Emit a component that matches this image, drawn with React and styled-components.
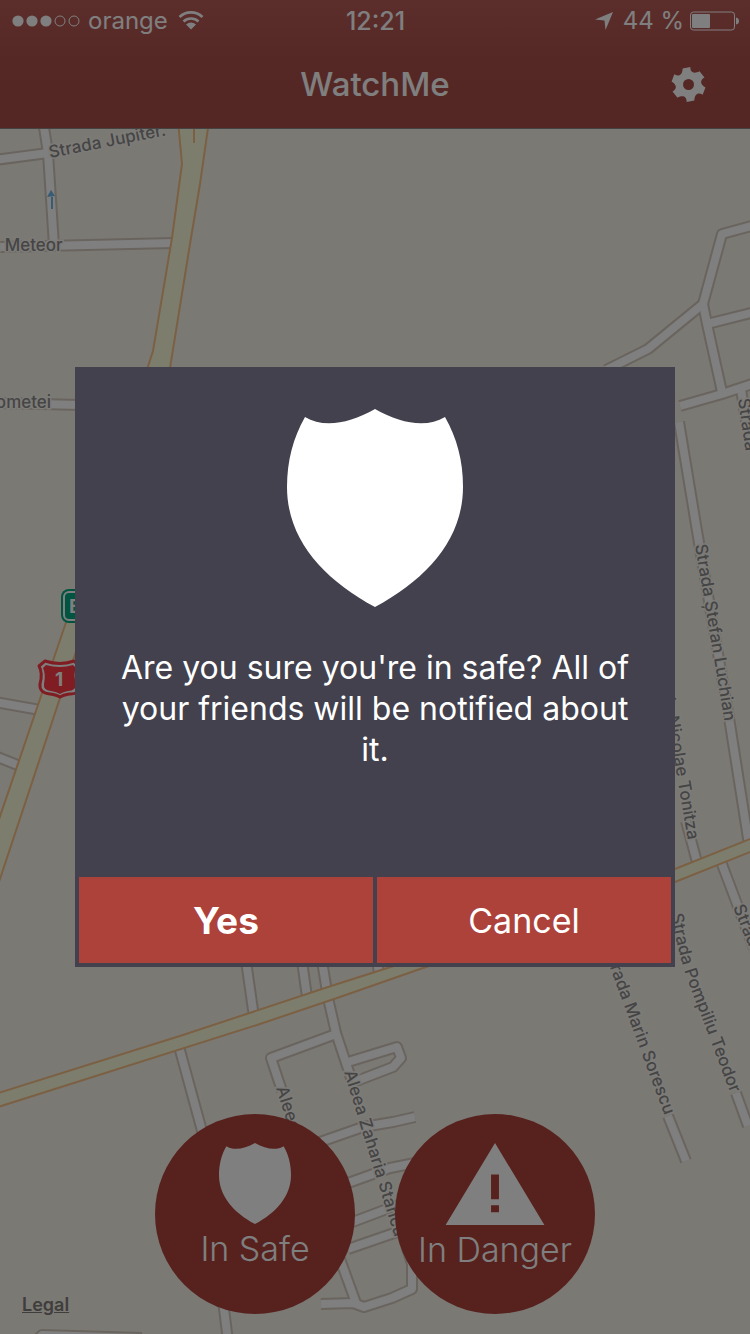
import React from 'react';
import styled, { createGlobalStyle } from 'styled-components';

const GlobalStyle = createGlobalStyle`
  * {
    box-sizing: border-box;
  }
  body {
    margin: 0;
    font-family: Inter, 'Liberation Sans', sans-serif;
  }
  button {
    border: 0;
    padding: 0;
    font-family: inherit;
    color: inherit;
    cursor: pointer;
  }
`;

const streets = [
  'M43 120 L48 152 L54 245',
  'M-5 159 L48 152',
  'M-5 246 L174 242',
  'M-5 402 L80 404',
  'M-5 701 L40 709',
  'M-5 755 L20 765',
  'M755 224 L722 233 L703 303 L707 323 L722 391',
  'M703 303 L648 348 L606 369',
  'M707 323 L755 311',
  'M680 405 L722 393 L755 382',
  'M741 388 L746 420',
  'M679 421 L697 530 L730 723 L750 850',
  'M686 820 L698 865',
  'M720 858 L737 903 L755 950',
  'M736 1092 L748 1125',
  'M668 1115 L686 1160',
  'M246 960 L254 1016',
  'M302 960 L307 996',
  'M322 960 L328 997 L336 1032 L352 1080',
  'M377 960 L379 972',
  'M336 1033 L271 1057 L282 1090',
  'M348 1061 L397 1046 L401 1057 L393 1066 L354 1081',
  'M178 1042 L202 1130 L228 1340',
  'M320 1141 L363 1126 L393 1121 L415 1116',
  'M348 1182 L390 1167 L415 1162',
  'M350 1222 L387 1208 L410 1200',
  'M348 1248 L400 1230',
  'M340 1258 L356 1302',
  'M321 1303 L353 1302 L364 1306 L392 1297 L412 1288 L412 1263 L400 1225',
  'M34 1342 L42 1334 L142 1337',
];

const highways = [
  'M178 120 L182 163 L172 237 L153 350 L140 390 L166 390 L170 367 L190 243 L200 183 L209 120 Z',
  'M80 580 L38 704 L-5 830 L-5 893 L60 697 L90 610 Z',
  'M-5 1093 L183 1034 L328 986 L500 931 L675 868 L755 836 L755 849 L675 881 L500 942 L423 967 L337 997 L257 1024 L-5 1107 Z',
];

const labels = [
  { id: 'jupiter', d: 'M50 157 L260 116', text: 'Strada Jupiter.' },
  { id: 'meteor', d: 'M-53 250 L200 250', text: 'Strada Meteor' },
  { id: 'prometei', d: 'M-79 407 L200 407', text: 'Strada Prometei' },
  { id: 'right', d: 'M738 398 L770 620', text: 'Strada' },
  { id: 'luchian', d: 'M695 544 L735 784', text: 'Strada Ștefan Luchian' },
  { id: 'tonitza', d: 'M657 659 L701 915', text: 'Strada Nicolae Tonitza' },
  { id: 'corner', d: 'M733 906 L800 1075', text: 'Strada' },
  { id: 'teodor', d: 'M671 913 Q679 958 691 988 L759 1168', text: 'Strada Pompiliu Teodor' },
  { id: 'sorescu', d: 'M604 950 L700 1211', text: 'Strada Marin Sorescu' },
  { id: 'aleea', d: 'M276 1087 L340 1290', text: 'Aleea' },
  { id: 'stancu', d: 'M344 1071 L420 1319', text: 'Aleea Zaharia Stancu' },
];

const gearPath = () => {
  const point = (angle, r) => {
    const rad = (angle * Math.PI) / 180;
    return `${(Math.cos(rad) * r).toFixed(2)} ${(Math.sin(rad) * r).toFixed(2)}`;
  };
  let d = '';
  for (let i = 0; i < 6; i++) {
    const a = -97 + i * 60;
    d += `${i === 0 ? 'M' : 'L'}${point(a - 13, 50)} L${point(a + 13, 51)} `;
    d += `C${point(a + 15, 35)} ${point(a + 36, 34)} ${point(a + 47, 50)} `;
  }
  return `${d}Z M16 0 A16 16 0 1 0 -16 0 A16 16 0 1 0 16 0 Z`;
};

const ShieldIcon = ({ width }) => (
  <svg width={width} viewBox="0 0 176 198" fill="#fff" aria-hidden="true">
    <path d="M88 0 C62 15 36 19 18 8 C6 29 0 52 0 78 C0 130 36 170 88 198 C140 170 176 130 176 78 C176 52 170 29 158 8 C140 19 114 15 88 0 Z" />
  </svg>
);

const WarningIcon = () => (
  <svg width="100" height="82" viewBox="0 0 100 83" aria-hidden="true">
    <path
      fill="#fff"
      fillRule="evenodd"
      d="M50 0 L100 83 H0 Z M46 32 V57 H54 V32 Z M46 63 V70 H54 V63 Z"
    />
  </svg>
);

const StreetMap = () => (
  <MapSvg viewBox="0 128 750 1206" preserveAspectRatio="xMidYMin slice">
    <g fill="none" strokeLinejoin="round">
      {streets.map((d) => (
        <path key={d} d={d} stroke="#d4c8bc" strokeWidth="12" />
      ))}
      {streets.map((d) => (
        <path key={d} d={d} stroke="#fefeff" strokeWidth="8" />
      ))}
    </g>
    {highways.map((d) => (
      <path key={d} d={d} fill="#f9fbd8" stroke="#f6c088" strokeWidth="2" />
    ))}
    <path d="M194 120 V142" stroke="#f6c088" strokeWidth="2" />
    <path d="M52 208 V196" stroke="#70b8e8" strokeWidth="2" />
    <path d="M47 196 L51 189 L55 195 Z" fill="#70b8e8" />
    {labels.map(({ id, d, text }) => (
      <g key={id}>
        <path id={id} d={d} fill="none" />
        <StreetName>
          <textPath href={`#${id}`}>{text}</textPath>
        </StreetName>
      </g>
    ))}
    <rect x="61" y="588" width="44" height="34" rx="8" fill="#00a880" />
    <rect
      x="64"
      y="591"
      width="38"
      height="28"
      rx="5"
      fill="#00a880"
      stroke="#fff"
      strokeWidth="2"
    />
    <RoadNumber x="69" y="612">
      E
    </RoadNumber>
    <g strokeLinejoin="round">
      <path
        d="M45 660 Q60 665 74 660 L80 666 Q76 672 80 683 Q80 694 69 693 Q63 694 60 696 Q57 694 50 693 Q39 692 40 683 Q43 672 39 665 Z"
        fill="#fff"
        stroke="#ff3a44"
        strokeWidth="3"
      />
      <path
        d="M46 664 Q60 668 73 664 L76 667 Q73 673 76 683 Q76 690 68 690 Q63 691 60 693 Q57 691 51 690 Q43 689 44 683 Q46 673 43 667 Z"
        fill="#ff3a44"
      />
    </g>
    <RoadNumber x="55" y="685">
      1
    </RoadNumber>
  </MapSvg>
);

const StatusBar = () => (
  <Status>
    <StatusGroup>
      <svg width="68" height="12" viewBox="0 0 68 12" aria-hidden="true">
        {[6, 20, 34].map((cx) => (
          <circle key={cx} cx={cx} cy="6" r="5.6" fill="#fff" />
        ))}
        {[48, 62].map((cx) => (
          <circle key={cx} cx={cx} cy="6" r="5" fill="none" stroke="#fff" />
        ))}
      </svg>
      <span>orange</span>
      <WifiSvg width="26" height="19" viewBox="0 0 26 19" aria-hidden="true">
        <path
          d="M1.500 6 A16.500 16.500 0 0 1 24.500 6 M5.500 10.500 A11 11 0 0 1 20.500 10.500"
          fill="none"
          stroke="#fff"
          strokeWidth="2.600"
        />
        <path d="M8 13.500 A7.500 7.500 0 0 1 18 13.500 L13 18.500 Z" fill="#fff" />
      </WifiSvg>
    </StatusGroup>
    <Clock>12:21</Clock>
    <StatusGroup $end>
      <svg width="18" height="18" viewBox="0 0 18 18" aria-hidden="true">
        <path d="M18 0 L10.500 18 L9.500 8.500 L0 7.500 Z" fill="#fff" />
      </svg>
      <Percent>44 %</Percent>
      <svg width="49" height="20" viewBox="0 0 49 20" aria-hidden="true">
        <rect x="0.500" y="1" width="44" height="18" rx="3" fill="none" stroke="#fff" />
        <rect x="2" y="3" width="18" height="14" rx="1" fill="#fff" />
        <path d="M46 6.500 Q49 7 49 10 Q49 13 46 13.500 Z" fill="#fff" />
      </svg>
    </StatusGroup>
  </Status>
);

const ConfirmDialog = ({ onClose }) => (
  <Overlay>
    <Dialog role="dialog" aria-modal="true" aria-describedby="message">
      <DialogBody>
        <ShieldIcon width="176" />
        <Message id="message">
          Are you sure you're in safe? All of your friends will be notified
          about it.
        </Message>
      </DialogBody>
      <DialogActions>
        <DialogButton $primary onClick={onClose}>
          Yes
        </DialogButton>
        <DialogButton onClick={onClose}>Cancel</DialogButton>
      </DialogActions>
    </Dialog>
  </Overlay>
);

export default function App() {
  const [open, setOpen] = React.useState(true);

  return (
    <Screen>
      <GlobalStyle />
      <Header>
        <StatusBar />
        <NavBar>
          <Title>WatchMe</Title>
          <SettingsButton aria-label="Settings">
            <svg width="35" height="35" viewBox="-51 -51 102 102">
              <path d={gearPath()} fill="#fff" fillRule="evenodd" />
            </svg>
          </SettingsButton>
        </NavBar>
      </Header>
      <MapArea>
        <StreetMap />
        <LegalLink href="#legal">Legal</LegalLink>
        <Actions>
          <RoundButton onClick={() => setOpen(true)}>
            <ShieldIcon width="72" />
            In Safe
          </RoundButton>
          <RoundButton onClick={() => setOpen(true)}>
            <WarningIcon />
            In Danger
          </RoundButton>
        </Actions>
      </MapArea>
      {open && <ConfirmDialog onClose={() => setOpen(false)} />}
    </Screen>
  );
}

const Screen = styled.div`
  display: flex;
  flex-direction: column;
  min-height: 100vh;
`;

const Header = styled.header`
  color: #fff;
  background: linear-gradient(#b75b57, #aa504c 50%, #a84e4a);
  border-bottom: 1px solid #8c8484;
`;

const Status = styled.div`
  display: grid;
  grid-template-columns: 1fr auto 1fr;
  align-items: center;
  height: 40px;
  padding: 1px 11px 0 12px;
  font-size: 24px;
`;

const StatusGroup = styled.div`
  display: flex;
  align-items: center;
  gap: ${(props) => (props.$end ? '6px' : '8px')};
  justify-content: ${(props) => (props.$end ? 'flex-end' : 'flex-start')};
`;

const WifiSvg = styled.svg`
  margin-left: 2px;
`;

const Clock = styled.span`
  font-size: 25px;
  font-weight: 500;
`;

const Percent = styled.span`
  margin-left: 4px;
`;

const NavBar = styled.nav`
  display: grid;
  grid-template-columns: 1fr auto 1fr;
  align-items: center;
  height: 88px;
  padding-right: 44px;
  padding-left: 44px;
`;

const Title = styled.h1`
  grid-column: 2;
  margin: 0;
  font-size: 33px;
  font-weight: 500;
`;

const SettingsButton = styled.button`
  display: flex;
  justify-self: end;
  background: none;
`;

const MapArea = styled.main`
  position: relative;
  display: flex;
  flex: 1;
  flex-direction: column;
  justify-content: flex-end;
  overflow: hidden;
  background: #f6f2e8;
`;

const MapSvg = styled.svg`
  position: absolute;
  inset: 0;
  width: 100%;
  height: 100%;
`;

const StreetName = styled.text`
  font-size: 17px;
  font-weight: 500;
  fill: #8a8a8a;
  stroke: #faf7f0;
  stroke-width: 3px;
  paint-order: stroke;
`;

const RoadNumber = styled.text`
  font-size: 19px;
  font-weight: 700;
  fill: #fff;
`;

const LegalLink = styled.a`
  position: absolute;
  bottom: 19px;
  left: 22px;
  font-size: 18px;
  font-weight: 600;
  color: #807c78;
`;

const Actions = styled.div`
  position: relative;
  display: flex;
  justify-content: center;
  gap: 40px;
  padding-bottom: 20px;
`;

const RoundButton = styled.button`
  display: flex;
  flex-direction: column;
  align-items: center;
  justify-content: flex-start;
  gap: 3px;
  width: 200px;
  height: 200px;
  padding-top: 29px;
  border-radius: 50%;
  background: #ae423c;
  color: #fff;
  font-size: 34px;
  font-weight: 300;
  line-height: 44px;
`;

const Overlay = styled.div`
  position: fixed;
  inset: 0;
  display: flex;
  align-items: center;
  justify-content: center;
  background: rgba(0, 0, 0, 0.5);
`;

const Dialog = styled.section`
  display: flex;
  flex-direction: column;
  width: 80%;
  min-height: 600px;
  padding: 4px;
  background: #42414d;
  color: #fff;
`;

const DialogBody = styled.div`
  display: flex;
  flex: 1;
  flex-direction: column;
  align-items: center;
  gap: 40px;
  padding: 38px 36px;
`;

const Message = styled.p`
  margin: 0;
  font-size: 32px;
  line-height: 41px;
  text-align: center;
`;

const DialogActions = styled.div`
  display: grid;
  grid-template-columns: 1fr 1fr;
  gap: 4px;
`;

const DialogButton = styled.button`
  height: 86px;
  background: #ad423b;
  font-size: ${(props) => (props.$primary ? '37px' : '34px')};
  font-weight: ${(props) => (props.$primary ? 700 : 400)};
`;
